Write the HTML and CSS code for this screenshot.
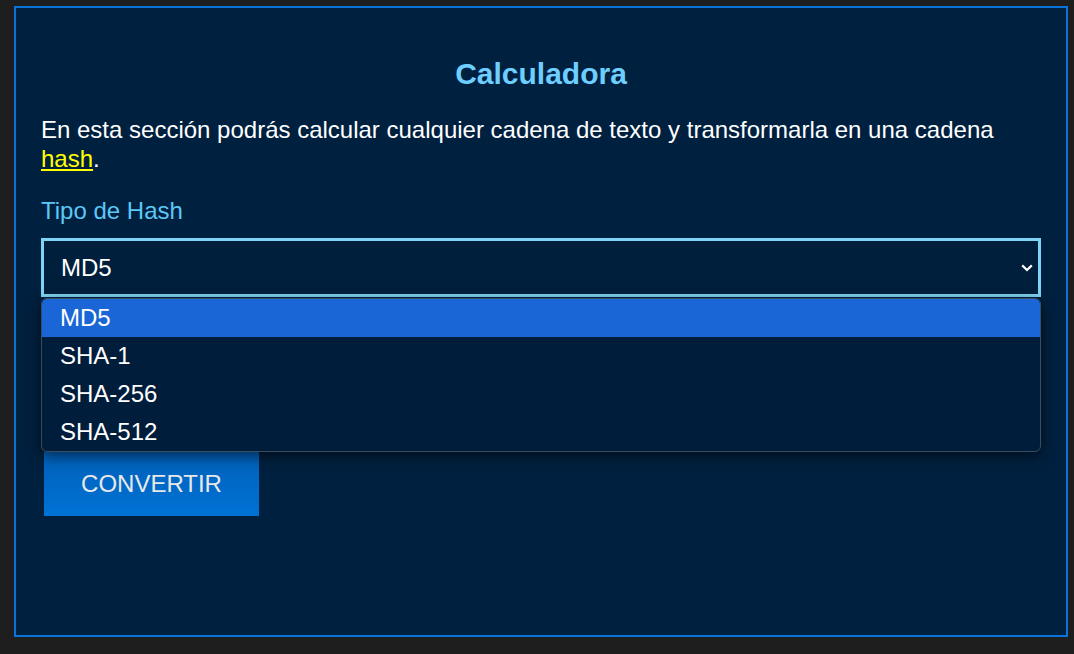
FILE: index.html
```html
<!DOCTYPE html>
<html lang="es">
<head>
<meta charset="utf-8">
<title>Calculadora</title>
<link rel="stylesheet" href="styles.css">
</head>
<body>
<main class="panel">
  <h2 class="title">Calculadora</h2>
  <p class="intro">En esta sección podrás calcular cualquier cadena de texto y transformarla en una cadena <a class="hash-link" href="#">hash</a>.</p>
  <form class="form">
    <label class="label">Tipo de Hash</label>
    <div class="select-wrap">
      <div class="select">
        <span class="select-value">MD5</span>
        <svg class="chevron" width="12" height="8" viewBox="0 0 12 8"><path d="M1.2 1.4 L6 6 L10.8 1.4" fill="none" stroke="#ffffff" stroke-width="2.2"/></svg>
      </div>
      <ul class="dropdown">
        <li class="option option-active">MD5</li>
        <li class="option">SHA-1</li>
        <li class="option">SHA-256</li>
        <li class="option">SHA-512</li>
      </ul>
    </div>
    <div class="text-input"></div>
    <button class="btn" type="button">CONVERTIR</button>
  </form>
</main>
</body>
</html>
```
FILE: styles.css
```css
html, body {
  margin: 0;
  padding: 0;
  background: #1e1e1e;
}
body {
  padding: 6px 6px 17px 14px;
  font-family: "Liberation Sans", Arial, sans-serif;
}
.panel {
  box-sizing: border-box;
  width: 1054px;
  height: 631px;
  border: 2px solid #0a74d8;
  background: #00203f;
  padding: 25px 25px;
  color: #ffffff;
}
.title {
  margin: 24px 0 0 0;
  text-align: center;
  font-size: 30px;
  line-height: 34px;
  font-weight: bold;
  color: #6dcfff;
}
.intro {
  margin: 24px 0 0 0;
  font-size: 24px;
  line-height: 29px;
  color: #ffffff;
}
.hash-link {
  color: #ffff00;
  text-decoration: underline;
}
.form {
  display: flex;
  flex-direction: column;
  align-items: flex-start;
  margin-top: 24px;
}
.label {
  font-size: 24px;
  line-height: 28px;
  color: #5cc8f7;
}
.select-wrap {
  position: relative;
  width: 1000px;
  margin-top: 13px;
}
.select {
  box-sizing: border-box;
  height: 59px;
  border: 3px solid #7fd3f5;
  background: #001f3d;
  display: flex;
  align-items: center;
  justify-content: space-between;
  padding: 0 5px 0 17px;
  font-size: 24px;
  color: #ffffff;
}
.chevron {
  display: block;
  margin-top: 1px;
}
.dropdown {
  position: absolute;
  left: 0;
  top: 60px;
  width: 1000px;
  box-sizing: border-box;
  margin: 0;
  padding: 0;
  list-style: none;
  background: #001d3b;
  border: 1px solid #3a4c60;
  border-radius: 6px;
  overflow: hidden;
  box-shadow: 0 4px 14px rgba(0, 0, 0, 0.55);
  z-index: 2;
}
.option {
  height: 38px;
  line-height: 38px;
  padding-left: 18px;
  font-size: 24px;
  color: #ffffff;
}
.option-active {
  background: #1a66d6;
}
.text-input {
  box-sizing: border-box;
  width: 1000px;
  height: 61px;
  margin-top: 65px;
  border: 2px solid #0f72d0;
  background: #001f3d;
}
.btn {
  margin: 29px 0 0 3px;
  width: 215px;
  height: 64px;
  border: none;
  background: linear-gradient(#0060b8, #0072d6);
  color: #e8e8e8;
  font-family: "Liberation Sans", Arial, sans-serif;
  font-size: 24px;
  padding: 0;
  cursor: pointer;
}
```
